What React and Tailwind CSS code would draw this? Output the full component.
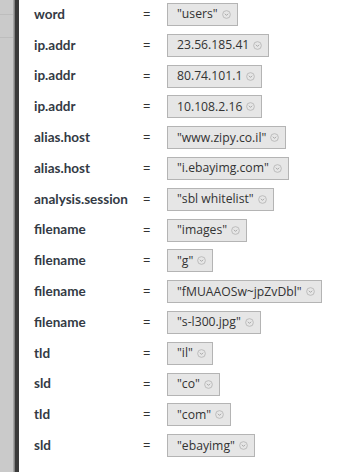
import React from "react";

const rows = [
  ["word", '"users"'],
  ["ip.addr", "23.56.185.41"],
  ["ip.addr", "80.74.101.1"],
  ["ip.addr", "10.108.2.16"],
  ["alias.host", '"www.zipy.co.il"'],
  ["alias.host", '"i.ebayimg.com"'],
  ["analysis.session", '"sbl whitelist"'],
  ["filename", '"images"'],
  ["filename", '"g"'],
  ["filename", '"fMUAAOSw~jpZvDbl"'],
  ["filename", '"s-l300.jpg"'],
  ["tld", '"il"'],
  ["sld", '"co"'],
  ["tld", '"com"'],
  ["sld", '"ebayimg"'],
];

function Chevron() {
  return (
    <svg width="9" height="9" viewBox="0 0 10 10" className="shrink-0">
      <circle cx="5" cy="5" r="4.3" fill="none" stroke="#b4b4b4" strokeWidth="0.9" />
      <path d="M3.2 4.2 L5 6 L6.8 4.2" fill="none" stroke="#a0a0a0" strokeWidth="1" />
    </svg>
  );
}

export default function App() {
  return (
    <div className="flex w-[354px] h-[472px] bg-white overflow-hidden" style={{ fontFamily: '"Open Sans", sans-serif' }}>
      {/* left side of the page behind the panel */}
      <div className="w-[13px] h-full bg-[#cacaca] flex flex-col">
        <div className="h-[15px] border-b border-[#bdbdbd]" />
        <div className="h-[23px] border-b border-[#bdbdbd]" />
      </div>
      <div className="w-[2px] h-full bg-gradient-to-r from-[#b8b8b8] to-[#707070]" />
      <div className="w-[4px] h-full bg-[#3a3a3a]" />

      <div className="flex-1 pt-[3px] pl-[15px] flex flex-col gap-[7.8px]">
        {rows.map(([k, v], i) => (
          <div key={i} className="flex items-center h-[23px]">
            <div className="w-[109px] text-[13.5px] font-bold text-[#333a44] leading-none font-['Lato',sans-serif]">{k}</div>
            <div className="w-[24px] text-[13px] text-[#333] leading-none">=</div>
            <div className="flex items-center h-[23px] border border-[#b4b4b4] bg-[#e6e6e6] pl-[9px] pr-[6px] gap-[4px]">
              <span className="text-[12.2px] text-[#333] leading-none whitespace-nowrap">{v}</span>
              <Chevron />
            </div>
          </div>
        ))}
      </div>
    </div>
  );
}
